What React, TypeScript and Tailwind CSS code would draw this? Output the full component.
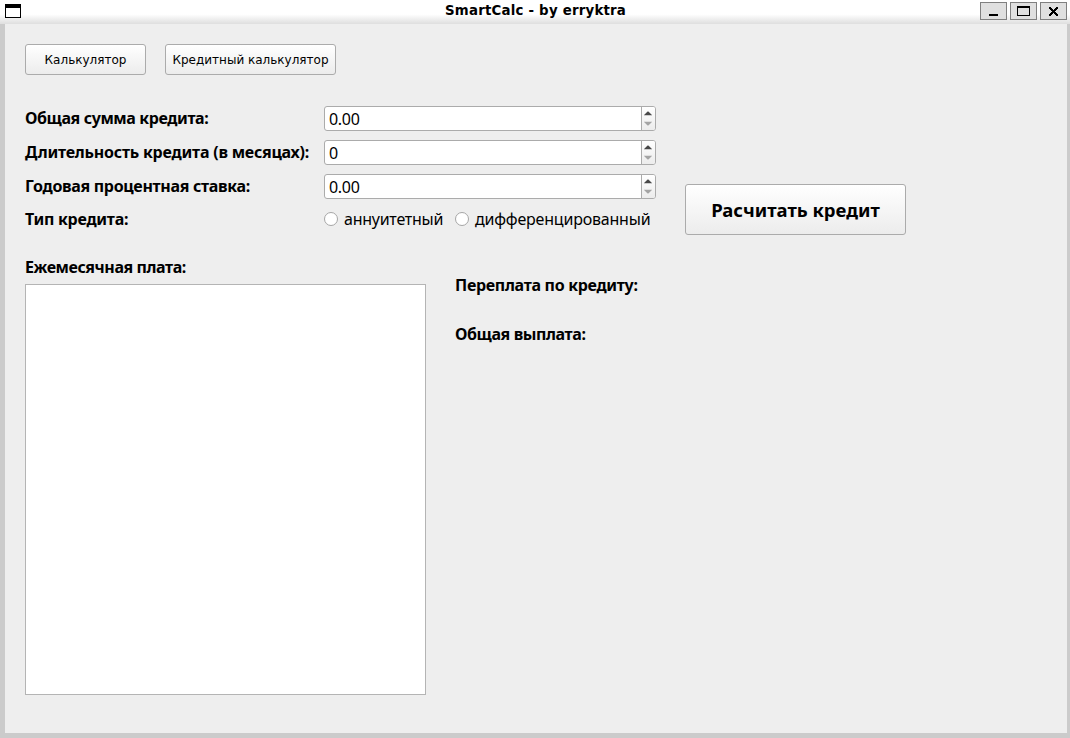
import React from "react";

const bold = "font-['Noto_Sans',sans-serif] font-bold whitespace-nowrap text-black";
const plain = "font-['Noto_Sans',sans-serif] whitespace-nowrap text-black";

function Label({ children, className }: { children: React.ReactNode; className: string }) {
  return <div className={`${bold} text-[16px] leading-[24px] ${className}`}>{children}</div>;
}

function SpinBox({ value }: { value: string }) {
  return (
    <div className="flex h-[25px] w-[332px] overflow-hidden rounded-[3px] border border-[#ababab] bg-white">
      <div className={`${plain} flex-1 pl-1 text-[16px] leading-[24px] tracking-[-0.3px]`}>{value}</div>
      <div className="w-[14px] border-l border-[#ababab] bg-linear-to-b from-white to-[#ececec]">
        <svg width="13" height="23" viewBox="0 0 13 23">
          <path d="M1.8 8.3L5.6 4.6H6.4L10.2 8.3z" fill="#484848" />
          <path d="M1.8 14.7H10.2L6.4 18.4H5.6z" fill="#a4a4a4" />
        </svg>
      </div>
    </div>
  );
}

function Radio({ label, className }: { label: string; className: string }) {
  return (
    <div className="flex items-center gap-1.5">
      <div className="size-[14px] shrink-0 rounded-full border border-[#a6a6a6] bg-white" />
      <div className={`${plain} text-[16px] leading-[22px] ${className}`}>{label}</div>
    </div>
  );
}

function PushButton({ children, className }: { children: React.ReactNode; className: string }) {
  return (
    <button
      className={`flex items-center justify-center rounded-[3px] border border-[#ababab] bg-linear-to-b from-white to-[#ececec] whitespace-nowrap text-black ${className}`}
    >
      {children}
    </button>
  );
}

function WindowButton({ children }: { children: React.ReactNode }) {
  return (
    <div className="h-[18px] w-[27px] border border-[#808080] bg-[#e0e0e0]">
      <svg width="25" height="16" viewBox="0 0 25 16" shapeRendering="crispEdges">{children}</svg>
    </div>
  );
}

export default function App() {
  return (
    <div className="flex h-[738px] w-[1070px] flex-col overflow-hidden bg-[#cbcbcb]">
      <div className="flex h-6 shrink-0 bg-linear-to-b from-white from-60% to-[#dedede] pt-0.5 pr-[3px] pl-[5px]">
        <svg className="mt-0.5 shrink-0" width="16" height="14" viewBox="0 0 16 14" shapeRendering="crispEdges">
          <rect width="16" height="14" fill="#000" />
          <rect x="1" y="4" width="14" height="9" fill="#fff" />
        </svg>
        <div className="flex-1 pt-px pl-[424px] font-['DejaVu_Sans',sans-serif] text-[13.33px] leading-4 font-bold tracking-[0.22px] whitespace-nowrap text-black">
          SmartCalc - by erryktra
        </div>
        <div className="flex gap-[3px]">
          <WindowButton><rect x="8" y="11" width="9" height="2" /></WindowButton>
          <WindowButton>
            <path d="M6 3h13v10H6z M7 5v7h11V5z" fillRule="evenodd" />
          </WindowButton>
          <WindowButton>
            <path d="M8 4h2v1h1v1h1v1h1v-1h1v-1h1v-1h2v2h-1v1h-1v1h-1v1h1v1h1v1h1v2h-2v-1h-1v-1h-1v-1h-1v1h-1v1h-1v1h-2v-2h1v-1h1v-1h1v-1h-1v-1h-1v-1h-1z" />
          </WindowButton>
        </div>
      </div>
      <div className="mr-[3px] mb-[5px] ml-[5px] flex-1 bg-[#eeeeee] pt-5 pl-5">
        <div className="flex gap-[19px]">
          <PushButton className="h-[31px] w-[121px] font-['DejaVu_Sans',sans-serif] text-[12px]">Калькулятор</PushButton>
          <PushButton className="h-[31px] w-[171px] font-['DejaVu_Sans',sans-serif] text-[12px]">Кредитный калькулятор</PushButton>
        </div>
        <div className="mt-[31px] flex">
          <div className="flex w-[299px] flex-col">
            <Label className="mb-[10px] tracking-[-0.4px]">Общая сумма кредита:</Label>
            <Label className="mb-[10px] tracking-[-0.22px]">Длительность кредита (в месяцах):</Label>
            <Label className="mb-[9px] tracking-[-0.31px]">Годовая процентная ставка:</Label>
            <Label className="tracking-[-0.27px]">Тип кредита:</Label>
          </div>
          <div className="flex h-[126px] w-[332px] flex-col gap-[9px]">
            <SpinBox value="0.00" />
            <SpinBox value="0" />
            <SpinBox value="0.00" />
            <div className="flex gap-3">
              <div className="w-[119px]"><Radio label="аннуитетный" className="tracking-[-0.25px]" /></div>
              <Radio label="дифференцированный" className="tracking-[-0.2px]" />
            </div>
          </div>
          <PushButton className="mt-[78px] ml-[29px] h-[51px] w-[221px] font-['Noto_Sans',sans-serif] text-[18.5px] font-bold">
            Расчитать кредит
          </PushButton>
        </div>
        <div className="mt-[20px] flex">
          <div className="w-[430px]">
            <Label className="tracking-[-0.42px]">Ежемесячная плата:</Label>
            <div className="mt-[5px] h-[411px] w-[401px] border border-[#b4b4b4] bg-white" />
          </div>
          <div className="flex flex-col gap-[25px] pt-[18px]">
            <Label className="tracking-[-0.3px]">Переплата по кредиту:</Label>
            <Label className="tracking-[-0.4px]">Общая выплата:</Label>
          </div>
        </div>
      </div>
    </div>
  );
}
